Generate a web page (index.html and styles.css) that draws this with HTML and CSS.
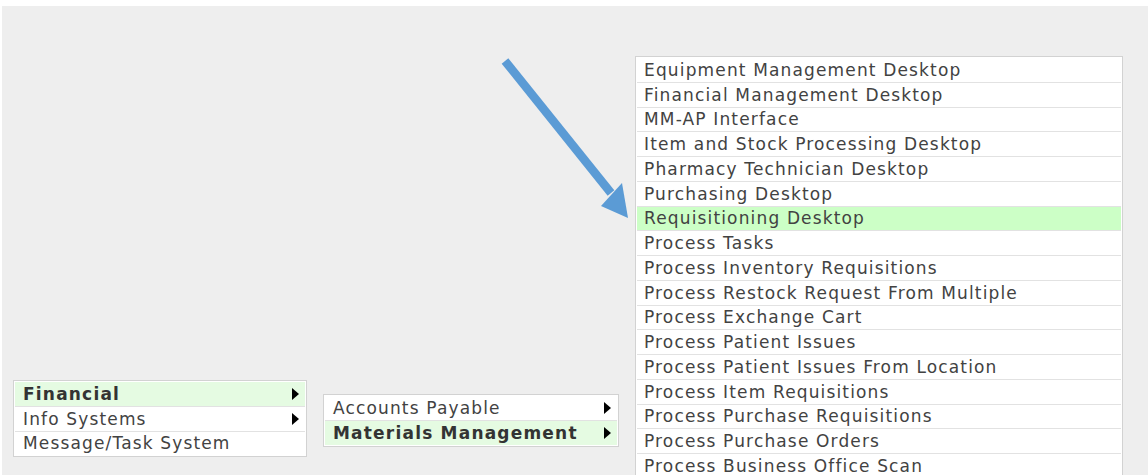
FILE: index.html
```html
<!DOCTYPE html>
<html lang="en">
<head>
<meta charset="utf-8">
<title>Menu</title>
<link rel="stylesheet" href="styles.css">
</head>
<body>
<div class="stage">
  <ul class="menu menu-root">
    <li class="item open"><span>Financial</span><svg class="caret" viewBox="0 0 7 12"><polygon points="0,0 7,6 0,12"/></svg></li>
    <li class="item"><span>Info Systems</span><svg class="caret" viewBox="0 0 7 12"><polygon points="0,0 7,6 0,12"/></svg></li>
    <li class="item"><span>Message/Task System</span></li>
  </ul>
  <ul class="menu menu-sub">
    <li class="item"><span>Accounts Payable</span><svg class="caret" viewBox="0 0 7 12"><polygon points="0,0 7,6 0,12"/></svg></li>
    <li class="item open"><span>Materials Management</span><svg class="caret" viewBox="0 0 7 12"><polygon points="0,0 7,6 0,12"/></svg></li>
  </ul>
  <ul class="menu menu-list">
    <li class="item">Equipment Management Desktop</li>
    <li class="item">Financial Management Desktop</li>
    <li class="item">MM-AP Interface</li>
    <li class="item">Item and Stock Processing Desktop</li>
    <li class="item">Pharmacy Technician Desktop</li>
    <li class="item">Purchasing Desktop</li>
    <li class="item hover">Requisitioning Desktop</li>
    <li class="item">Process Tasks</li>
    <li class="item">Process Inventory Requisitions</li>
    <li class="item">Process Restock Request From Multiple</li>
    <li class="item">Process Exchange Cart</li>
    <li class="item">Process Patient Issues</li>
    <li class="item">Process Patient Issues From Location</li>
    <li class="item">Process Item Requisitions</li>
    <li class="item">Process Purchase Requisitions</li>
    <li class="item">Process Purchase Orders</li>
    <li class="item">Process Business Office Scan</li>
  </ul>
  <svg class="pointer" viewBox="0 0 140 170" width="140" height="170">
    <line x1="6" y1="5" x2="112" y2="137" stroke="#5b9bd5" stroke-width="8.5" stroke-linecap="butt"/>
    <polygon points="129,162 102,150 123,127" fill="#5b9bd5"/>
  </svg>
</div>
</body>
</html>
```

FILE: styles.css
```css
html, body {
  margin: 0;
  padding: 0;
  background: #ffffff;
}

.stage {
  position: relative;
  margin: 6px 0 0 2px;
  height: 469px;
  background: #eeeeee;
  overflow: hidden;
  display: flex;
  align-items: flex-start;
  gap: 16px;
  padding-left: 11px;
  box-sizing: border-box;
  font-family: "DejaVu Sans", Verdana, sans-serif;
  font-size: 17px;
  letter-spacing: 1.15px;
  color: #424242;
}

.menu {
  list-style: none;
  margin: 0;
  padding: 1px;
  background: #ffffff;
  border: 1px solid #d2d2d2;
  flex: none;
}

.item {
  display: flex;
  align-items: center;
  justify-content: space-between;
  height: 23.75px;
  padding: 0 6px 0 8px;
  border-top: 1px solid #e2e2e2;
  white-space: nowrap;
  background: #ffffff;
}

.item:first-child {
  border-top: none;
}

.item.open {
  background: #e5fbe2;
  font-weight: bold;
  letter-spacing: 1.2px;
  color: #333333;
}

.item.hover {
  background: #ccffc6;
}

.caret {
  width: 7px;
  height: 12px;
  fill: #000000;
  flex: none;
}

.menu-root {
  width: 294px;
  box-sizing: border-box;
  margin-top: 374px;
}

.menu-sub {
  width: 296px;
  box-sizing: border-box;
  margin-top: 388px;
}

.menu-list {
  width: 488px;
  box-sizing: border-box;
  margin-top: 50px;
}

.menu-list .item {
  padding-left: 7px;
}

.pointer {
  position: absolute;
  left: 497px;
  top: 50px;
}
```
